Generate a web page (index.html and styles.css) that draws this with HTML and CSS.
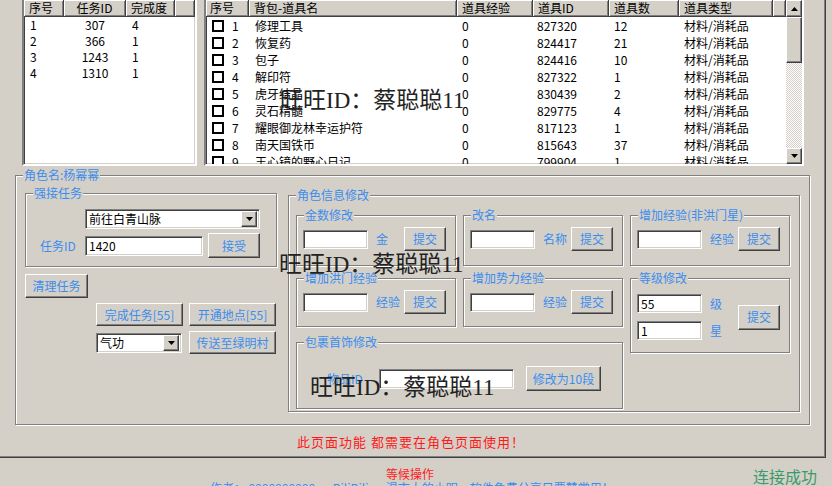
FILE: index.html
```html
<!DOCTYPE html>
<html lang="zh-CN">
<head>
  <meta charset="UTF-8" />
  <title>角色</title>
  <link rel="stylesheet" href="styles.css">
</head>
<body>
  <div class="page">
    <div class="lists">
      <div class="listbox tasks">
        <div class="lhead">
          <span class="tc1">序号</span><span class="tc2">任务ID</span><span class="tc3">完成度</span><span class="tc4"></span>
        </div>
        <div class="trow"><span class="tc1">1</span><span class="tc2">307</span><span class="tc3">4</span></div>
        <div class="trow"><span class="tc1">2</span><span class="tc2">366</span><span class="tc3">1</span></div>
        <div class="trow"><span class="tc1">3</span><span class="tc2">1243</span><span class="tc3">1</span></div>
        <div class="trow"><span class="tc1">4</span><span class="tc2">1310</span><span class="tc3">1</span></div>
      </div>

      <div class="listbox bag">
        <div class="bag-body">
          <div class="lhead">
            <span class="bc1">序号</span><span class="bc2">背包-道具名</span><span class="bc3">道具经验</span><span class="bc4">道具ID</span><span class="bc5">道具数</span><span class="bc6">道具类型</span><span class="bc7"></span>
          </div>
          <div class="brow"><span class="bc1"><i class="chk"></i>1</span><span class="bc2">修理工具</span><span class="bc3">0</span><span class="bc4">827320</span><span class="bc5">12</span><span class="bc6">材料/消耗品</span></div>
          <div class="brow"><span class="bc1"><i class="chk"></i>2</span><span class="bc2">恢复药</span><span class="bc3">0</span><span class="bc4">824417</span><span class="bc5">21</span><span class="bc6">材料/消耗品</span></div>
          <div class="brow"><span class="bc1"><i class="chk"></i>3</span><span class="bc2">包子</span><span class="bc3">0</span><span class="bc4">824416</span><span class="bc5">10</span><span class="bc6">材料/消耗品</span></div>
          <div class="brow"><span class="bc1"><i class="chk"></i>4</span><span class="bc2">解印符</span><span class="bc3">0</span><span class="bc4">827322</span><span class="bc5">1</span><span class="bc6">材料/消耗品</span></div>
          <div class="brow"><span class="bc1"><i class="chk"></i>5</span><span class="bc2">虎牙结晶</span><span class="bc3">0</span><span class="bc4">830439</span><span class="bc5">2</span><span class="bc6">材料/消耗品</span></div>
          <div class="brow"><span class="bc1"><i class="chk"></i>6</span><span class="bc2">灵石精髓</span><span class="bc3">0</span><span class="bc4">829775</span><span class="bc5">4</span><span class="bc6">材料/消耗品</span></div>
          <div class="brow"><span class="bc1"><i class="chk"></i>7</span><span class="bc2">耀眼御龙林幸运护符</span><span class="bc3">0</span><span class="bc4">817123</span><span class="bc5">1</span><span class="bc6">材料/消耗品</span></div>
          <div class="brow"><span class="bc1"><i class="chk"></i>8</span><span class="bc2">南天国铁币</span><span class="bc3">0</span><span class="bc4">815643</span><span class="bc5">37</span><span class="bc6">材料/消耗品</span></div>
          <div class="brow"><span class="bc1"><i class="chk"></i>9</span><span class="bc2">王心镜的野心日记</span><span class="bc3">0</span><span class="bc4">799904</span><span class="bc5">1</span><span class="bc6">材料/消耗品</span></div>
        </div>
        <div class="vscroll">
          <div class="sbtn raised"><svg width="7" height="4" viewBox="0 0 7 4"><path d="M3.5 0L7 4H0Z"/></svg></div>
          <div class="thumb raised"></div>
          <div class="track"></div>
          <div class="sbtn raised"><svg width="7" height="4" viewBox="0 0 7 4"><path d="M0 0H7L3.5 4Z"/></svg></div>
        </div>
      </div>
    </div>

    <div class="grp role">
      <span class="glabel">角色名:杨幂幂</span>
      <div class="role-body">
        <div class="leftcol">
          <div class="grp accept">
            <span class="glabel">强接任务</span>
            <div class="combo field wide"><span>前往白青山脉</span><i class="drop raised"><svg width="7" height="4" viewBox="0 0 7 4"><path d="M0 0H7L3.5 4Z"/></svg></i></div>
            <div class="idrow">
              <span class="lbl">任务ID</span>
              <input class="field tid" value="1420">
              <button class="btn take">接受</button>
            </div>
          </div>
          <button class="btn clear">清理任务</button>
          <div class="btnrow">
            <button class="btn wbtn">完成任务[55]</button>
            <button class="btn wbtn">开通地点[55]</button>
          </div>
          <div class="btnrow r2">
            <div class="combo field small"><span>气功</span><i class="drop raised"><svg width="7" height="4" viewBox="0 0 7 4"><path d="M0 0H7L3.5 4Z"/></svg></i></div>
            <button class="btn wbtn">传送至绿明村</button>
          </div>
        </div>

        <div class="grp info">
          <span class="glabel">角色信息修改</span>
          <div class="info-grid">
            <div class="grp sub">
              <span class="glabel">金数修改</span>
              <div class="fieldrow"><input class="field num"><span class="unit">金</span><button class="btn submit">提交</button></div>
            </div>
            <div class="grp sub">
              <span class="glabel">改名</span>
              <div class="fieldrow"><input class="field num"><span class="unit">名称</span><button class="btn submit">提交</button></div>
            </div>
            <div class="grp sub">
              <span class="glabel">增加经验(非洪门星)</span>
              <div class="fieldrow"><input class="field num"><span class="unit">经验</span><button class="btn submit">提交</button></div>
            </div>
            <div class="grp sub low">
              <span class="glabel">增加洪门经验</span>
              <div class="fieldrow"><input class="field num"><span class="unit">经验</span><button class="btn submit">提交</button></div>
            </div>
            <div class="grp sub low">
              <span class="glabel">增加势力经验</span>
              <div class="fieldrow"><input class="field num"><span class="unit">经验</span><button class="btn submit">提交</button></div>
            </div>
            <div class="grp level">
              <span class="glabel">等级修改</span>
              <div class="level-body">
                <div class="level-rows">
                  <div class="lvrow"><input class="field num" value="55"><span class="unit">级</span></div>
                  <div class="lvrow"><input class="field num" value="1"><span class="unit">星</span></div>
                </div>
                <button class="btn submit tall">提交</button>
              </div>
            </div>
            <div class="grp pack">
              <span class="glabel">包裹首饰修改</span>
              <div class="packrow">
                <span class="lbl itemlbl">物品ID</span>
                <input class="field itemid">
                <button class="btn seg">修改为10段</button>
              </div>
            </div>
          </div>
        </div>
      </div>
    </div>

    <div class="notice">此页面功能 都需要在角色页面使用！</div>
  </div>

  <div class="status">
    <div class="status-mid">
      <div class="wait">等候操作</div>
      <div class="author">作者：  9999999999 · BiliBili · 渴市大的小明，软件免费分享只要赞赏用！</div>
    </div>
    <div class="conn">连接成功</div>
  </div>

  <div class="wm wm1">旺旺ID：蔡聪聪11</div>
  <div class="wm wm2">旺旺ID：蔡聪聪11</div>
  <div class="wm wm3">旺旺ID：蔡聪聪11</div>
</body>
</html>
```

FILE: styles.css
```css
* {
  box-sizing: border-box;
}

body {
  margin: 0;
  width: 832px;
  height: 486px;
  overflow: hidden;
  position: relative;
  background: #d4d0c8;
  color: #000;
  font-family: "Noto Sans CJK SC", sans-serif;
  font-size: 12px;
  line-height: 14px;
}

.page {
  width: 826px;
  height: 458px;
  border-right: 1px solid #404040;
  border-bottom: 1px solid #404040;
  box-shadow: inset -1px -1px #808080;
}

/* win98 bits */
.raised {
  background: #d4d0c8;
  border: 1px solid;
  border-color: #fff #404040 #404040 #fff;
  box-shadow: inset -1px -1px #808080;
}

.field {
  background: #fff;
  border: 1px solid;
  border-color: #808080 #fff #fff #808080;
  box-shadow: inset 1px 1px #404040, inset -1px -1px #d4d0c8;
  font: inherit;
  color: #000;
  padding: 0 0 0 3px;
  outline: none;
}

.btn {
  background: #d4d0c8;
  border: 1px solid;
  border-color: #fff #404040 #404040 #fff;
  box-shadow: inset -1px -1px #808080;
  font: inherit;
  color: #3b8ded;
  padding: 0;
  display: flex;
  align-items: center;
  justify-content: center;
  white-space: nowrap;
}

.grp {
  position: relative;
  border: 1px solid #808080;
  box-shadow: inset 1px 1px #fff, 1px 1px #fff;
}

.glabel {
  position: absolute;
  top: -8px;
  left: 7px;
  padding: 0 1px;
  background: #d4d0c8;
  color: #3b8ded;
  white-space: nowrap;
}

.lbl, .unit {
  color: #3b8ded;
}

/* lists */
.lists {
  display: flex;
  gap: 7px;
  height: 166px;
  padding-left: 22px;
}

.listbox {
  height: 166px;
  background: #fff;
  border: 2px solid;
  border-top: 0;
  border-color: #808080 #fff #fff #808080;
  box-shadow: inset 1px 0 #404040, inset -1px -1px #d4d0c8;
  overflow: hidden;
}

.lhead {
  display: flex;
  height: 17px;
}

.lhead span {
  height: 17px;
  background: #d4d0c8;
  border-right: 1px solid #404040;
  border-bottom: 1px solid #404040;
  box-shadow: inset 1px 1px #fff, inset -1px -1px #808080;
  padding-left: 5px;
  white-space: nowrap;
  line-height: 16px;
}

.tasks {
  width: 175px;
}

.trow {
  display: flex;
  height: 16px;
  line-height: 16px;
}

.tc1 { width: 40px; padding-left: 6px; }
.tc2 { width: 62px; text-align: center; }
.lhead .tc2 { padding-left: 0; }
.tc3 { width: 49px; padding-left: 6px; }
.tc4 { flex: 1; }

.bag {
  width: 600px;
  display: flex;
}

.bag-body {
  width: 580px;
  height: 164px;
  overflow: hidden;
}

.brow {
  display: flex;
  align-items: center;
  height: 17px;
  line-height: 17px;
  white-space: nowrap;
}

.bc1 { width: 43px; display: flex; align-items: center; padding-left: 6px; }
.lhead .bc1 { display: block; padding-left: 4px; }
.bc2 { width: 208px; padding-left: 6px; }
.bc3 { width: 76px; padding-left: 5px; }
.bc4 { width: 76px; padding-left: 4px; }
.bc5 { width: 70px; padding-left: 5px; }
.bc6 { width: 94px; padding-left: 5px; }
.bc7 { flex: 1; }

.chk {
  width: 12px;
  height: 12px;
  border: 2px solid #000;
  background: #fff;
  margin-right: 8px;
}

.vscroll {
  width: 16px;
  height: 164px;
  display: flex;
  flex-direction: column;
}

.sbtn {
  height: 16px;
  display: flex;
  align-items: center;
  justify-content: center;
}

.sbtn:first-child {
  height: 17px;
}

.thumb {
  height: 46px;
}

.track {
  flex: 1;
  background: repeating-conic-gradient(#d4d0c8 0 25%, #fff 0 50%) 0 0 / 2px 2px;
}

/* main group */
.role {
  margin: 9px 0 0 15px;
  width: 795px;
  height: 250px;
  padding: 17px 0 0 9px;
}

.role-body {
  display: flex;
  align-items: flex-start;
}

.leftcol {
  width: 252px;
}

.accept {
  height: 74px;
  padding-top: 15px;
}

.combo {
  display: flex;
  align-items: center;
  justify-content: space-between;
  height: 20px;
  padding: 2px 2px 2px 3px;
}

.combo.wide {
  width: 175px;
  margin-left: 59px;
}

.combo.small {
  width: 86px;
}

.drop {
  width: 16px;
  height: 16px;
  display: flex;
  align-items: center;
  justify-content: center;
}

.idrow {
  display: flex;
  align-items: center;
  margin-top: 4px;
  padding-left: 14px;
}

.idrow .lbl {
  width: 45px;
}

.tid {
  width: 118px;
  height: 20px;
}

.take {
  width: 52px;
  height: 25px;
  margin-left: 5px;
}

.clear {
  width: 63px;
  height: 24px;
  margin-top: 7px;
}

.btnrow {
  display: flex;
  align-items: center;
  gap: 6px;
  margin: 5px 0 0 71px;
}

.btnrow.r2 {
  gap: 7px;
}

.wbtn {
  width: 87px;
  height: 23px;
}

/* role info */
.info {
  width: 512px;
  height: 217px;
  margin: 2px 0 0 11px;
  padding: 19px 0 0 7px;
}

.info-grid {
  display: grid;
  grid-template-columns: repeat(3, 160px);
  grid-template-rows: 51px 52px 67px;
  column-gap: 7px;
  row-gap: 12px;
}

.sub {
  height: 51px;
}

.sub.low {
  height: 49px;
}

.fieldrow {
  display: flex;
  align-items: center;
  padding: 11px 0 0 6px;
}

.num {
  width: 65px;
  height: 19px;
}

.unit {
  width: 36px;
  padding-left: 8px;
  white-space: nowrap;
}

.submit {
  width: 42px;
  height: 24px;
}

.level {
  grid-column: 3;
  grid-row: 2 / 4;
  height: 75px;
}

.level-body {
  display: flex;
  align-items: center;
  padding: 15px 0 0 6px;
}

.level-rows {
  display: flex;
  flex-direction: column;
  gap: 8px;
}

.lvrow {
  display: flex;
  align-items: center;
}

.submit.tall {
  height: 25px;
}

.pack {
  grid-column: 1 / 3;
  height: 67px;
}

.packrow {
  display: flex;
  align-items: center;
  padding: 23px 0 0 30px;
}

.itemlbl {
  width: 52px;
}

.itemid {
  width: 135px;
  height: 20px;
}

.seg {
  width: 75px;
  height: 25px;
  margin-left: 12px;
}

.notice {
  margin-top: 9px;
  padding-left: 297px;
  font-size: 13px;
  line-height: 15px;
  letter-spacing: 1px;
  color: #ff1a1a;
}

/* status bar */
.status {
  display: flex;
  height: 28px;
  padding: 9px 15px 0 210px;
}

.status-mid {
  width: 400px;
  text-align: center;
  line-height: 14px;
}

.wait {
  color: #ff1a1a;
}

.author {
  color: #3b8ded;
  white-space: nowrap;
}

.conn {
  margin-left: auto;
  font-size: 16px;
  line-height: 18px;
  color: #3a9a6a;
}

/* watermark overlay */
.wm {
  position: absolute;
  font-family: "Liberation Serif", "Noto Sans CJK SC", serif;
  font-size: 23px;
  line-height: 23px;
  color: #222;
  white-space: nowrap;
  pointer-events: none;
}

.wm1 { left: 280px; top: 89px; }
.wm2 { left: 279px; top: 253px; }
.wm3 { left: 310px; top: 376px; }
```
